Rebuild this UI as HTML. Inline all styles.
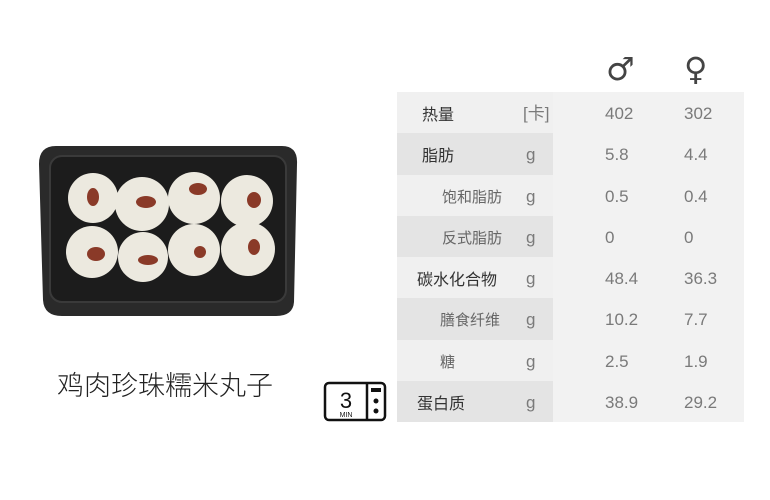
<!DOCTYPE html>
<html><head><meta charset="utf-8"><style>
body{margin:0;width:770px;height:500px;background:#fff;position:relative;overflow:hidden;font-family:"Liberation Sans","Noto Sans CJK SC",sans-serif;}
.a{position:absolute}
.tbl{position:absolute;left:397px;top:92px;width:347px;}
.row{height:41.25px;line-height:41.25px;position:relative;background:#f2f2f2;}
.row .l{position:absolute;left:0;top:0;width:156px;height:100%;}
.row.d .l{background:#e4e4e4}
.row.w .l{background:#f0f0f0}
.row span{position:absolute;top:1px;font-size:17px;color:#7a7a7a;line-height:41px;}
.lab{color:#333!important;font-family:"Noto Sans CJK SC",sans-serif;font-size:16px!important}
.sub{color:#666!important;font-size:15px!important;font-family:"Noto Sans CJK SC",sans-serif;}
</style></head><body>
<svg class="a" style="left:36px;top:142px" width="266" height="178" viewBox="0 0 266 178">
<path d="M20 4 H246 Q262 4 261 22 L258 160 Q257 174 240 174 H26 Q8 174 7 158 L3 22 Q3 4 20 4Z" fill="#2a2a2a"/>
<rect x="14" y="14" width="236" height="146" rx="12" fill="#1c1c1c" stroke="#3a3a3a" stroke-width="2"/>
<g fill="#ece9df">
<circle cx="57" cy="56" r="25"/><circle cx="106" cy="62" r="27"/><circle cx="158" cy="56" r="26"/><circle cx="211" cy="59" r="26"/>
<circle cx="56" cy="110" r="26"/><circle cx="107" cy="115" r="25"/><circle cx="158" cy="108" r="26"/><circle cx="212" cy="107" r="27"/>
</g>
<g fill="#8a3a28">
<ellipse cx="57" cy="55" rx="6" ry="9"/><ellipse cx="110" cy="60" rx="10" ry="6"/><ellipse cx="162" cy="47" rx="9" ry="6"/><ellipse cx="218" cy="58" rx="7" ry="8"/>
<ellipse cx="60" cy="112" rx="9" ry="7"/><ellipse cx="112" cy="118" rx="10" ry="5"/><ellipse cx="164" cy="110" rx="6" ry="6"/><ellipse cx="218" cy="105" rx="6" ry="8"/>
</g>
</svg>
<div class="a" style="left:57px;top:364px;font-size:27px;color:#222;font-family:'Noto Sans CJK SC',sans-serif;font-weight:300;">鸡肉珍珠糯米丸子</div>
<svg class="a" style="left:323px;top:381px" width="64" height="41" viewBox="0 0 64 41">
<rect x="2" y="2" width="60" height="37" rx="4" fill="none" stroke="#111" stroke-width="2.5"/>
<line x1="44" y1="2" x2="44" y2="39" stroke="#111" stroke-width="2.5"/>
<rect x="48" y="7" width="10" height="4" fill="#111"/>
<circle cx="53" cy="20" r="2.5" fill="#111"/><circle cx="53" cy="30" r="2.5" fill="#111"/>
<text x="23" y="27" text-anchor="middle" font-size="22" font-family="Liberation Sans" fill="#111">3</text>
<text x="23" y="36" text-anchor="middle" font-size="7" font-family="Liberation Sans" fill="#111">MIN</text>
</svg>
<div class="a" style="left:606px;top:50px;font-size:32px;color:#444;font-family:'DejaVu Sans',sans-serif;">♂</div>
<div class="a" style="left:684px;top:50px;font-size:32px;color:#444;font-family:'DejaVu Sans',sans-serif;">♀</div>
<div class="tbl">
<div class="row w"><div class="l"></div><span class="lab" style="left:25px">热量</span><span style="left:126px">[卡]</span><span style="left:208px">402</span><span style="left:287px">302</span></div>
<div class="row d"><div class="l"></div><span class="lab" style="left:25px">脂肪</span><span style="left:129px">g</span><span style="left:208px">5.8</span><span style="left:287px">4.4</span></div>
<div class="row w"><div class="l"></div><span class="sub" style="left:45px">饱和脂肪</span><span style="left:129px">g</span><span style="left:208px">0.5</span><span style="left:287px">0.4</span></div>
<div class="row d"><div class="l"></div><span class="sub" style="left:45px">反式脂肪</span><span style="left:129px">g</span><span style="left:208px">0</span><span style="left:287px">0</span></div>
<div class="row w"><div class="l"></div><span class="lab" style="left:20px">碳水化合物</span><span style="left:129px">g</span><span style="left:208px">48.4</span><span style="left:287px">36.3</span></div>
<div class="row d"><div class="l"></div><span class="sub" style="left:43px">膳食纤维</span><span style="left:129px">g</span><span style="left:208px">10.2</span><span style="left:287px">7.7</span></div>
<div class="row w"><div class="l"></div><span class="sub" style="left:43px">糖</span><span style="left:129px">g</span><span style="left:208px">2.5</span><span style="left:287px">1.9</span></div>
<div class="row d"><div class="l"></div><span class="lab" style="left:20px">蛋白质</span><span style="left:129px">g</span><span style="left:208px">38.9</span><span style="left:287px">29.2</span></div>
</div>
</body></html>
